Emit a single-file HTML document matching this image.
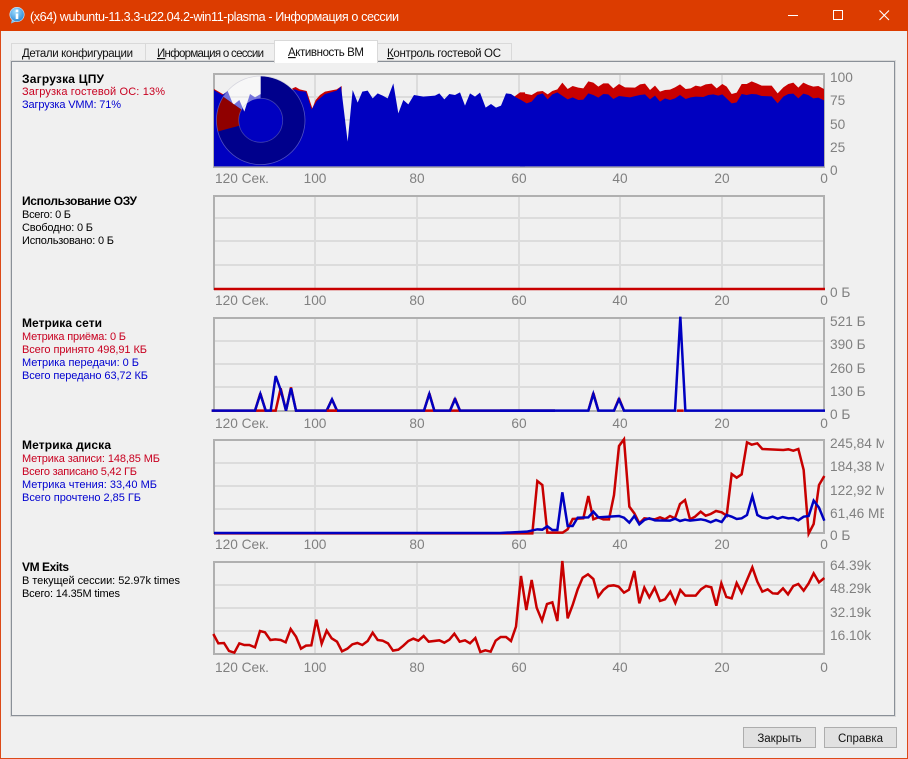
<!DOCTYPE html>
<html><head><meta charset="utf-8"><style>
html,body{margin:0;padding:0;background:#f0f0f0;width:908px;height:759px;overflow:hidden}
svg{display:block}
text{font-family:"Liberation Sans",sans-serif;font-size:11px;fill:#000}
.t{font-size:11.5px;fill:#111}
.b{font-weight:bold;font-size:12px}
.r{fill:#c80020}
.u{fill:#0000d0}
.a{font-size:13.7px;fill:#808080}
.m{text-anchor:middle}
.g{stroke:#dcdcdc;stroke-width:2;fill:none}
.f{stroke:#b0b0b0;stroke-width:2;fill:none}
</style></head><body>
<svg width="908" height="759" viewBox="0 0 908 759" xmlns="http://www.w3.org/2000/svg">
<defs>
<clipPath id="cl"><rect x="826" y="430" width="58" height="120"/></clipPath>
<radialGradient id="ib" cx=".4" cy=".3" r=".8"><stop offset="0" stop-color="#9fdcff"/><stop offset="1" stop-color="#1f7fd0"/></radialGradient>
</defs>
<!-- window -->
<rect x="0" y="0" width="908" height="759" fill="#f0f0f0"/>
<rect x="0.5" y="0.5" width="907" height="758" fill="none" stroke="#dc4a18"/>
<rect x="0" y="0" width="908" height="31" fill="#dc3c00"/>
<path d="M12 19 L11 23.5 L17 21 Z" fill="#7cc4f4"/>
<circle cx="17" cy="14.5" r="7.2" fill="url(#ib)" stroke="#cfeaff" stroke-width=".6"/>
<rect x="15.7" y="13.5" width="2.6" height="5.5" fill="#fff"/><rect x="15.7" y="9.6" width="2.6" height="2.6" fill="#fff"/>
<text x="30" y="21" class="t" style="fill:#fff;font-size:12.6px" textLength="369" lengthAdjust="spacing">(x64) wubuntu-11.3.3-u22.04.2-win11-plasma - Информация о сессии</text>
<path d="M788 15.5H798" stroke="#fff" stroke-width="1"/>
<rect x="833.5" y="10.5" width="9" height="9" fill="none" stroke="#fff" stroke-width="1"/>
<path d="M879.5 10.5L889 20M889 10.5L879.5 20" stroke="#fff" stroke-width="1.1"/>

<!-- tabs -->
<rect x="11.5" y="43.5" width="134" height="19" fill="#f0f0f0" stroke="#d9d9d9"/>
<rect x="145.5" y="43.5" width="130" height="19" fill="#f0f0f0" stroke="#d9d9d9"/>
<rect x="377.5" y="43.5" width="134" height="19" fill="#f0f0f0" stroke="#d9d9d9"/>
<!-- pane -->
<rect x="10.5" y="60.5" width="885" height="656" fill="none" stroke="#d9d9d9"/>
<rect x="11.5" y="61.5" width="883" height="654" fill="#f0f0f0" stroke="#8a9098"/>
<rect x="274.5" y="40.5" width="103" height="22" fill="#fff" stroke="#d9d9d9"/>
<rect x="275" y="60" width="102" height="3" fill="#fff"/>
<text x="22" y="57" class="t" textLength="111" lengthAdjust="spacing"><tspan text-decoration="underline">Д</tspan>етали конфигурации</text>
<text x="157" y="57" class="t" textLength="107" lengthAdjust="spacing"><tspan text-decoration="underline">И</tspan>нформация о сессии</text>
<text x="288" y="56" class="t" textLength="76" lengthAdjust="spacing"><tspan text-decoration="underline">А</tspan>ктивность ВМ</text>
<text x="387" y="57" class="t" textLength="114" lengthAdjust="spacing"><tspan text-decoration="underline">К</tspan>онтроль гостевой ОС</text>

<!-- left labels -->
<text x="22" y="83" class="b" textLength="82" lengthAdjust="spacing">Загрузка ЦПУ</text>
<text x="22" y="95" class="r" textLength="143" lengthAdjust="spacing">Загрузка гостевой ОС: 13%</text>
<text x="22" y="108" class="u" textLength="99" lengthAdjust="spacing">Загрузка VMM: 71%</text>

<text x="22" y="205" class="b" textLength="115" lengthAdjust="spacing">Использование ОЗУ</text>
<text x="22" y="218" textLength="49" lengthAdjust="spacing">Всего: 0 Б</text>
<text x="22" y="231" textLength="71" lengthAdjust="spacing">Свободно: 0 Б</text>
<text x="22" y="244" textLength="92" lengthAdjust="spacing">Использовано: 0 Б</text>

<text x="22" y="327" class="b" textLength="80" lengthAdjust="spacing">Метрика сети</text>
<text x="22" y="340" class="r" textLength="104" lengthAdjust="spacing">Метрика приёма: 0 Б</text>
<text x="22" y="353" class="r" textLength="125" lengthAdjust="spacing">Всего принято 498,91 КБ</text>
<text x="22" y="366" class="u" textLength="117" lengthAdjust="spacing">Метрика передачи: 0 Б</text>
<text x="22" y="379" class="u" textLength="126" lengthAdjust="spacing">Всего передано 63,72 КБ</text>

<text x="22" y="449" class="b" textLength="89" lengthAdjust="spacing">Метрика диска</text>
<text x="22" y="462" class="r" textLength="138" lengthAdjust="spacing">Метрика записи: 148,85 МБ</text>
<text x="22" y="475" class="r" textLength="115" lengthAdjust="spacing">Всего записано 5,42 ГБ</text>
<text x="22" y="488" class="u" textLength="135" lengthAdjust="spacing">Метрика чтения: 33,40 МБ</text>
<text x="22" y="501" class="u" textLength="119" lengthAdjust="spacing">Всего прочтено 2,85 ГБ</text>

<text x="22" y="571" class="b" textLength="47" lengthAdjust="spacing">VM Exits</text>
<text x="22" y="584" textLength="158" lengthAdjust="spacing">В текущей сессии: 52.97k times</text>
<text x="22" y="597" textLength="98" lengthAdjust="spacing">Всего: 14.35M times</text>

<!-- CPU chart -->
<path class="g" d="M214 97H824M214 120H824M214 143H824M315 74V167M417 74V167M519 74V167M620 74V167M722 74V167"/>
<rect class="f" x="214" y="74" width="610" height="93"/>
<g transform="translate(205,65) scale(.33333)">
<path fill="#c80000" d="M27 72L55 88V300H27Z"/>
<path fill="#c80000" d="M262 70L272 66L284 73L305 78L322 130L332 105L345 90L360 80L395 73L410 63V200H262Z"/>
<path fill="#c80000" d="M925 97L945 82L960 82V200H925Z"/>
<path fill="#0000c0" d="M27 75L52 90L68 78L85 120L103 105L118 140L135 87L150 97L165 88L270 73L282 78L303 80L320 133L335 108L360 87L395 77L408 64L428 230L443 75L458 113L472 80L488 77L503 100L518 85L533 92L548 100L565 55L580 145L595 105L610 118L627 90L655 95L690 92L703 85L718 103L733 87L750 90L765 82L780 122L795 85L810 95L825 83L842 128L858 117L873 128L888 122L903 85L918 87L933 97L948 105L960 110V304H27Z"/>
</g>
<g transform="translate(520,65) scale(.33333)">
<path fill="#c80000" d="M0 82L20 87L35 90L52 80L68 78L83 88L97 78L112 73L127 53L143 72L158 63L175 68L190 70L205 49L220 53L235 65L250 55L265 55L280 70L297 57L315 67L345 68L360 58L375 56L390 75L405 62L420 80L435 75L450 74L465 67L480 58L497 72L512 70L527 62L542 65L557 58L575 56L590 70L607 57L620 65L635 87L650 83L665 57L680 57L695 49L710 55L725 62L755 62L773 85L790 67L805 57L820 53L835 68L850 53L865 60L880 65L895 63L912 72V200H0Z"/>
<path fill="#0000c0" d="M0 103L20 115L35 110L52 90L68 85L83 103L97 88L112 82L143 103L158 97L175 105L190 104L205 85L220 90L235 98L250 87L265 88L280 102L297 93L330 97L360 90L375 88L390 103L405 92L420 110L435 100L450 105L465 100L480 90L497 102L512 97L527 95L550 96L565 90L580 88L595 92L607 88L635 115L650 112L665 87L680 90L695 87L710 88L725 93L755 94L773 115L790 95L805 87L820 86L835 100L850 86L865 90L880 100L895 98L912 106V304H0Z"/>
</g>
<!-- donut -->
<path fill="#fff" fill-opacity=".45" d="M260.7 76.3A44 44 0 0 0 223.4 96.9L241.5 109.6A22 22 0 0 1 260.7 98.3Z"/>
<path fill="#900000" d="M223.4 96.9A44 44 0 0 0 218.1 131.5L239.4 125.7A22 22 0 0 1 241.5 109.6Z"/>
<path fill="#00008c" d="M260.7 76.3A44 44 0 1 1 218.1 131.5L239.4 125.7A22 22 0 1 0 260.7 98.3Z"/>
<circle cx="260.7" cy="120.3" r="44.3" fill="none" stroke="#b4b4c8" stroke-opacity=".45" stroke-width=".8"/>
<circle cx="260.7" cy="120.3" r="22" fill="none" stroke="#b4b4c8" stroke-opacity=".35" stroke-width=".8"/>
<text x="215" y="183" class="a">120 Сек.</text><text x="315" y="183" class="a m">100</text><text x="417" y="183" class="a m">80</text><text x="519" y="183" class="a m">60</text><text x="620" y="183" class="a m">40</text><text x="722" y="183" class="a m">20</text><text x="824" y="183" class="a m">0</text>
<text x="830" y="82" class="a">100</text><text x="830" y="105" class="a">75</text><text x="830" y="129" class="a">50</text><text x="830" y="152" class="a">25</text><text x="830" y="175" class="a">0</text>

<!-- RAM chart -->
<path class="g" d="M214 218H824M214 241H824M214 265H824M315 196V289M417 196V289M519 196V289M620 196V289M722 196V289"/>
<rect class="f" x="214" y="196" width="610" height="93"/>
<path d="M214 289H825" stroke="#c80000" stroke-width="2.5" fill="none"/>
<text x="215" y="305" class="a">120 Сек.</text><text x="315" y="305" class="a m">100</text><text x="417" y="305" class="a m">80</text><text x="519" y="305" class="a m">60</text><text x="620" y="305" class="a m">40</text><text x="722" y="305" class="a m">20</text><text x="824" y="305" class="a m">0</text>
<text x="830" y="297" class="a">0 Б</text>

<!-- Network chart -->
<path class="g" d="M214 341H824M214 364H824M214 387H824M315 318V411M417 318V411M519 318V411M620 318V411M722 318V411"/>
<rect class="f" x="214" y="318" width="610" height="93"/>
<g transform="translate(205,310) scale(.33333)" fill="none" stroke-width="7.5" stroke-linejoin="miter">
<path stroke="#c80000" d="M20 302H197L212 302L227 235L243 302L258 232L273 302H1050"/>
<path stroke="#c80000" d="M166 250L150 302M166 250L182 302M673 250L657 302M673 250L688 302M750 265L735 302M750 265L765 302M381 268L365 302M381 268L396 302"/>
<path stroke="#0000c0" d="M20 302H150L166 252L182 302H197L212 198L227 240L243 302L258 235L273 302H365L381 268L396 302H657L673 252L688 302H735L750 268L765 302H1050"/>
<path stroke="#c80000" d="M365 302H396"/>
</g>
<g transform="translate(500,310) scale(.33333)" fill="none" stroke-width="7.5">
<path stroke="#c80000" d="M280 249L265 302M280 249L295 302M357 265L342 302M357 265L372 302"/>
<path stroke="#0000c0" d="M0 302H265L280 252L295 302H342L357 268L372 302H525L541 20L556 302H975"/>
<path stroke="#c80000" d="M531 302H551"/>
</g>
<text x="215" y="428" class="a">120 Сек.</text><text x="315" y="428" class="a m">100</text><text x="417" y="428" class="a m">80</text><text x="519" y="428" class="a m">60</text><text x="620" y="428" class="a m">40</text><text x="722" y="428" class="a m">20</text><text x="824" y="428" class="a m">0</text>
<text x="830" y="326" class="a">521 Б</text><text x="830" y="349" class="a">390 Б</text><text x="830" y="373" class="a">260 Б</text><text x="830" y="396" class="a">130 Б</text><text x="830" y="419" class="a">0 Б</text>

<!-- Disk chart -->
<path class="g" d="M214 463H824M214 486H824M214 509H824M315 440V533M417 440V533M519 440V533M620 440V533M722 440V533"/>
<rect class="f" x="214" y="440" width="610" height="93"/>
<g transform="translate(500,430) scale(.33333)" fill="none" stroke-width="7.5">
<path stroke="#c80000" d="M-858 310H97L112 153L127 165L142 308H188L203 298L218 267L250 265L265 198L280 268L295 262L310 268L327 268L342 195L357 48L372 28L388 230L403 250L418 280L433 265L465 268L480 262L495 268L510 258L525 265L540 222L555 210L570 268L585 260L602 245L617 257L632 252L648 243L665 247L680 257L695 132L710 143L725 133L741 37L755 44L772 40L787 57L850 60L865 58L880 62L895 57L911 120L926 311L941 282L957 165L973 138"/>
<path stroke="#0000c0" d="M-858 309H0L80 305L112 298L127 299L142 289L157 300L172 300L187 187L203 288L218 288L233 263L265 262L280 245L295 262L357 258L372 263L388 278L403 258L418 283L433 270L448 265L465 271L510 272L525 266L540 273L555 269L570 272L602 268L617 271L632 277L648 270L665 276L680 255L695 260L710 267L725 265L741 255L757 198L772 255L787 263L802 265L818 260L833 266L848 261L865 265L880 264L895 271L911 260L926 258L941 212L957 233L973 272"/>
</g>
<text x="215" y="549" class="a">120 Сек.</text><text x="315" y="549" class="a m">100</text><text x="417" y="549" class="a m">80</text><text x="519" y="549" class="a m">60</text><text x="620" y="549" class="a m">40</text><text x="722" y="549" class="a m">20</text><text x="824" y="549" class="a m">0</text>
<g clip-path="url(#cl)"><text x="830" y="448" class="a">245,84 МБ</text><text x="830" y="471" class="a">184,38 МБ</text><text x="830" y="495" class="a">122,92 МБ</text><text x="830" y="518" class="a">61,46 МБ</text><text x="830" y="540" class="a">0 Б</text></g>

<!-- VM exits chart -->
<path class="g" d="M214 585H824M214 608H824M214 631H824M315 562V654M417 562V654M519 562V654M620 562V654M722 562V654"/>
<rect class="f" x="214" y="562" width="610" height="92"/>
<g transform="translate(205,555) scale(.33333)" fill="none" stroke-width="7.5">
<path stroke="#c80000" d="M25 237L40 265L57 264L72 288L88 293L103 265L118 270L133 270L150 277L165 228L180 232L196 255L211 253L227 255L242 262L257 222L273 245L288 281L303 272L319 271L334 194L350 266L365 227L380 250L396 260L411 289L427 281L442 268L457 264L472 270L488 258L503 233L518 255L533 257L549 265L564 287L580 284L595 272L610 258L625 251L640 257L656 243L671 260L703 256L718 263L733 254L748 236L764 260L780 256L795 265L811 249L826 291L841 286L857 290L872 257L887 246L903 246L918 258L933 215L948 63L964 165L980 75L995 158L1011 197L1026 147L1042 142L1057 198L1072 18L1088 190L1103 150L1118 103L1133 68L1149 58L1165 72L1180 125L1195 105L1210 93L1226 91L1241 95L1257 113L1272 104L1288 48L1303 145L1318 98L1333 127L1349 98L1365 138L1380 133L1396 110L1411 144L1426 105L1441 122L1472 122L1488 103L1503 93L1519 97L1534 152L1549 85L1564 126L1580 130L1595 84L1610 113L1642 37L1657 80L1672 110L1688 103L1703 115L1718 116L1734 100L1749 118L1765 93L1780 87L1796 107L1811 85L1826 55L1842 82L1858 69"/>
</g>
<text x="215" y="672" class="a">120 Сек.</text><text x="315" y="672" class="a m">100</text><text x="417" y="672" class="a m">80</text><text x="519" y="672" class="a m">60</text><text x="620" y="672" class="a m">40</text><text x="722" y="672" class="a m">20</text><text x="824" y="672" class="a m">0</text>
<text x="830" y="570" class="a">64.39k</text><text x="830" y="593" class="a">48.29k</text><text x="830" y="617" class="a">32.19k</text><text x="830" y="640" class="a">16.10k</text>

<!-- buttons -->
<rect x="743.5" y="727.5" width="72" height="20" fill="#e1e1e1" stroke="#adadad"/>
<rect x="824.5" y="727.5" width="72" height="20" fill="#e1e1e1" stroke="#adadad"/>
<text x="779.5" y="742" class="t m">Закрыть</text>
<text x="860.5" y="742" class="t m">Справка</text>
</svg>
</body></html>
